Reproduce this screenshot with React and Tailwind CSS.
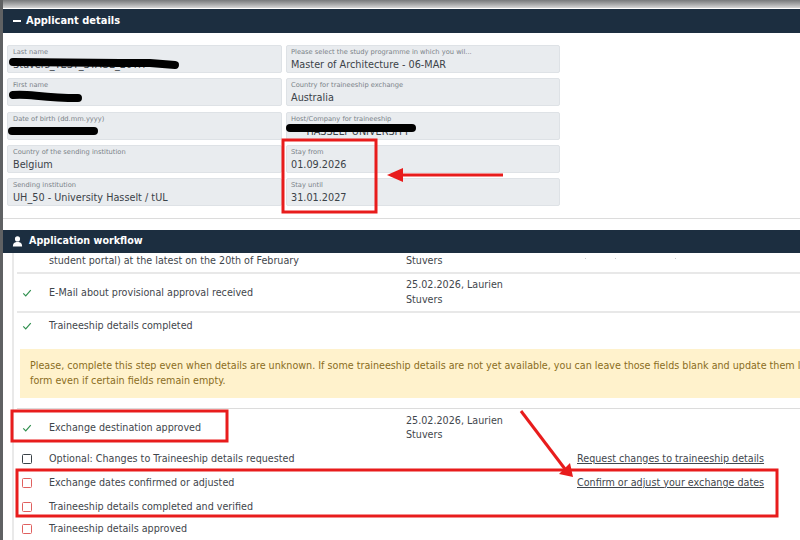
const font = { fontFamily: '"DejaVu Sans", sans-serif' };

function Field({ label, value, className = "" }) {
  return (
    <div className={`h-[28px] rounded-[2px] border border-[#dee2e6] bg-[#e9ecef] overflow-hidden pt-[1px] ${className}`}>
      <div className="text-[6.7px] leading-[11px] text-[#7a8288] whitespace-nowrap">{label}</div>
      <div className="text-[9.7px] leading-[13px] text-[#3b4248] whitespace-pre">{value || "\u00a0"}</div>
    </div>
  );
}

function Check() {
  return (
    <svg viewBox="0 0 12 12" className="w-[10px] h-[10px]" fill="none" stroke="#2f8f4e" strokeWidth="1.4">
      <path d="M1.5 6.5 L4.5 9.5 L10.5 2.5" />
    </svg>
  );
}

function Box({ red }) {
  return <span className={`block w-[10px] h-[10px] rounded-[1.5px] border ${red ? "border-[#e0605f]" : "border-[#3a4248]"}`} />;
}

function Row({ icon, label, date, link, className = "" }) {
  return (
    <div className={`flex items-center ${className}`}>
      <div className="w-[32px] flex justify-center pr-[12px] shrink-0">{icon}</div>
      <div className="w-[357px] shrink-0 text-[#3f464c] text-[9.6px] leading-[14px] whitespace-nowrap">{label}</div>
      <div className="w-[171px] shrink-0 text-[#3f464c] text-[9.6px] leading-[14.5px]">
        {date && <div>{date}</div>}
        {date && <div>Stuvers</div>}
      </div>
      {link && <a className="text-[#3f464c] text-[9.6px] leading-[14px] underline whitespace-nowrap">{link}</a>}
    </div>
  );
}

export default function App() {
  return (
    <div className="relative w-[800px] h-[540px] overflow-hidden bg-white flex" style={font}>
      <div className="w-[3px] shrink-0 bg-[#5f6163]" />
      <div className="flex-1 min-w-0 flex flex-col">
        <div className="h-[8px] shrink-0 bg-gradient-to-b from-[#77797b] to-[#d6d6d6]" />
        <div className="h-[24px] mt-[1px] shrink-0 bg-[#1c2e40] flex items-center pl-[10px] gap-[5px] text-white font-bold text-[9.9px]">
          <span className="block w-[8px] h-[1.5px] bg-white" />
          <span>Applicant details</span>
        </div>
        <div className="h-[186px] shrink-0 border-b border-[#dcdcdc] pt-[12px] pl-[4px]">
          <div className="grid grid-cols-[275px_274px] gap-x-[4px] gap-y-[5.25px]">
            <Field className="pl-[5px]" label="Last name" value="Stuvers_TEST_STAGE_20TH" />
            <Field className="pl-[4px]" label="Please select the study programme in which you wil..." value="Master of Architecture - 06-MAR" />
            <Field className="pl-[5px]" label="First name" />
            <Field className="pl-[4px]" label="Country for traineeship exchange" value="Australia" />
            <Field className="pl-[5px]" label="Date of birth (dd.mm.yyyy)" />
            <Field className="pl-[4px]" label="Host/Company for traineeship" value="     HASSELT UNIVERSITY" />
            <Field className="pl-[5px]" label="Country of the sending institution" value="Belgium" />
            <Field className="pl-[4px]" label="Stay from" value="01.09.2026" />
            <Field className="pl-[5px]" label="Sending institution" value="UH_50 - University Hasselt / tUL" />
            <Field className="pl-[4px]" label="Stay until" value="31.01.2027" />
          </div>
        </div>
        <div className="h-[23px] mt-[11px] shrink-0 bg-[#1c2e40] flex items-center pl-[9px] gap-[6px] text-white font-bold text-[9.6px]">
          <svg viewBox="0 0 12 12" className="w-[11px] h-[11px]" fill="white">
            <circle cx="6" cy="3.2" r="2.8" />
            <path d="M1 11.5 C1 7.5 3 6.5 6 6.5 C9 6.5 11 7.5 11 11.5 Z" />
          </svg>
          <span>Application workflow</span>
        </div>
        <div className="flex-1 min-h-0 overflow-hidden ml-[9px] border-l-2 border-[#e9e9e9] pl-[3px] flex flex-col">
          <div className="h-[21px] shrink-0 border-b-2 border-[#e8e8e8] overflow-hidden flex items-end">
            <div className="flex text-[#3f464c] text-[9.6px] leading-[14px] pb-[4px]">
              <div className="w-[32px] shrink-0" />
              <div className="w-[357px] shrink-0 whitespace-nowrap">student portal) at the latest on the 20th of February</div>
              <div>Stuvers</div>
            </div>
          </div>
          <Row className="h-[39px] shrink-0 border-b-2 border-[#e8e8e8]" icon={<Check />} label="E-Mail about provisional approval received" date="25.02.2026, Laurien" />
          <Row className="h-[26px] shrink-0" icon={<Check />} label="Traineeship details completed" />
          <div className="h-[49px] shrink-0 mt-[10px] ml-[3px] bg-[#fff2cc] text-[#8a6d1d] text-[9.6px] leading-[15px] pl-[10px] pt-[9px] whitespace-nowrap">
            <div>Please, complete this step even when details are unknown. If some traineeship details are not yet available, you can leave those fields blank and update them later.</div>
            <div>form even if certain fields remain empty.</div>
          </div>
          <div className="h-[1px] shrink-0 mt-[10px] bg-[#dcdcdc]" />
          <Row className="h-[38px] shrink-0" icon={<Check />} label="Exchange destination approved" date="25.02.2026, Laurien" />
          <Row className="h-[23px] shrink-0" icon={<Box />} label="Optional: Changes to Traineeship details requested" link="Request changes to traineeship details" />
          <Row className="h-[25px] shrink-0" icon={<Box red />} label="Exchange dates confirmed or adjusted" link="Confirm or adjust your exchange dates" />
          <Row className="h-[23px] shrink-0" icon={<Box red />} label="Traineeship details completed and verified" />
          <Row className="h-[21px] shrink-0" icon={<Box red />} label="Traineeship details approved" />
        </div>
      </div>

      {/* annotations and redactions over the screenshot */}
      <svg className="absolute left-0 top-0 pointer-events-none" width="800" height="540" viewBox="0 0 800 540" fill="none">
        <g stroke="#000" strokeLinecap="round" strokeWidth="8">
          <path d="M13 62 L120 63 L150 63 L175 65" />
          <path d="M13 95 C28 93 40 98 78 98" />
          <path d="M12 131 L94 131" />
          <path d="M290 128 L412 128" />
        </g>
        <g fill="#c9cbcd">
          <rect x="585" y="258" width="1" height="1" />
          <rect x="615" y="258" width="1" height="1" />
          <rect x="675" y="258" width="1" height="1" />
        </g>
        <g stroke="#e81c1c" strokeWidth="3">
          <rect x="283" y="140" width="93" height="72" />
          <rect x="12" y="411" width="215" height="30" />
          <rect x="17" y="470" width="760" height="46" />
          <path d="M402 175 L503 175" />
          <path d="M521 411 L565 469" />
        </g>
        <path d="M387 175 L403 168 L403 182 Z" fill="#e81c1c" />
        <path d="M573 477 L559 474 L570 463 Z" fill="#e81c1c" />
      </svg>
    </div>
  );
}
